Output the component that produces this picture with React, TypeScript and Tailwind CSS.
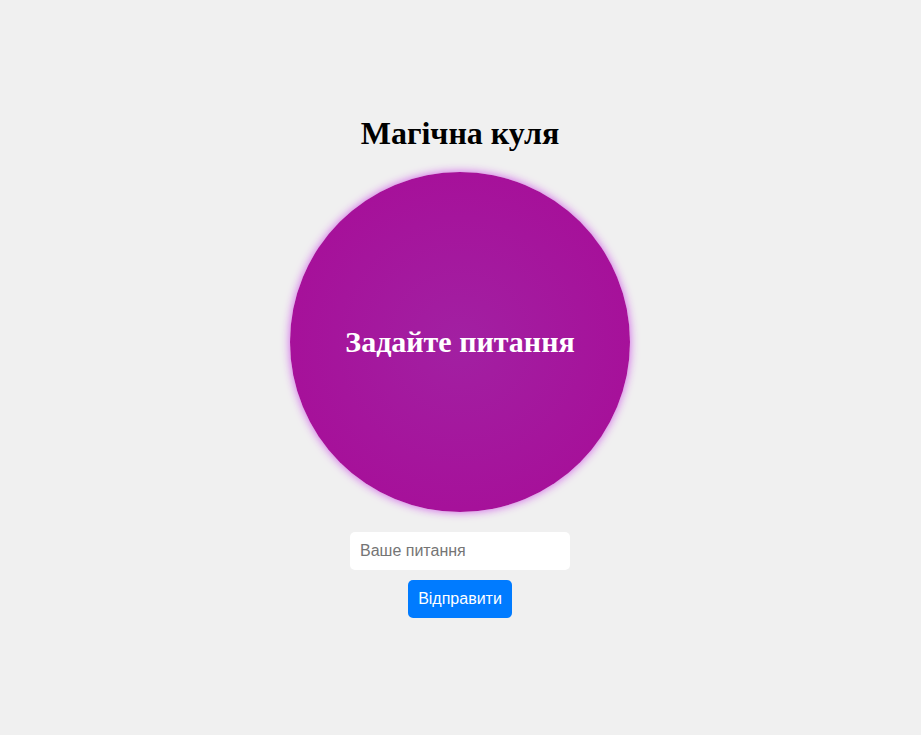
import React, { useState } from 'react';

export default function App() {
  const [question, setQuestion] = useState('');

  return (
    <div className="min-h-screen w-full bg-[#f0f0f0] flex flex-col items-center pt-[115px] pr-[1px]">
      <h1 className="font-['Liberation_Serif',serif] font-bold text-[32px] leading-[37px] text-black mb-[20px]">
        Магічна куля
      </h1>

      {/* Ball */}
      <div className="w-[340px] h-[340px] rounded-full flex items-center justify-center bg-[radial-gradient(circle,#a220a2_0%,#a6119a_70%,#a60f92_100%)] shadow-[0_0_10px_#cf5ce8]">
        <h2 className="font-['Liberation_Serif',serif] font-bold text-[30px] leading-[34px] text-white">
          Задайте питання
        </h2>
      </div>

      <input
        type="text"
        value={question}
        onChange={(e) => setQuestion(e.target.value)}
        placeholder="Ваше питання"
        className="mt-[20px] w-[220px] h-[38px] rounded-[5px] bg-white px-[10px] font-['Liberation_Sans',sans-serif] text-[16px] text-black placeholder:text-[#757575] outline-none"
      />
      <button className="mt-[10px] h-[38px] px-[10px] rounded-[5px] bg-[#007bff] text-white font-['Liberation_Sans',sans-serif] text-[16px]">
        Відправити
      </button>
    </div>
  );
}
